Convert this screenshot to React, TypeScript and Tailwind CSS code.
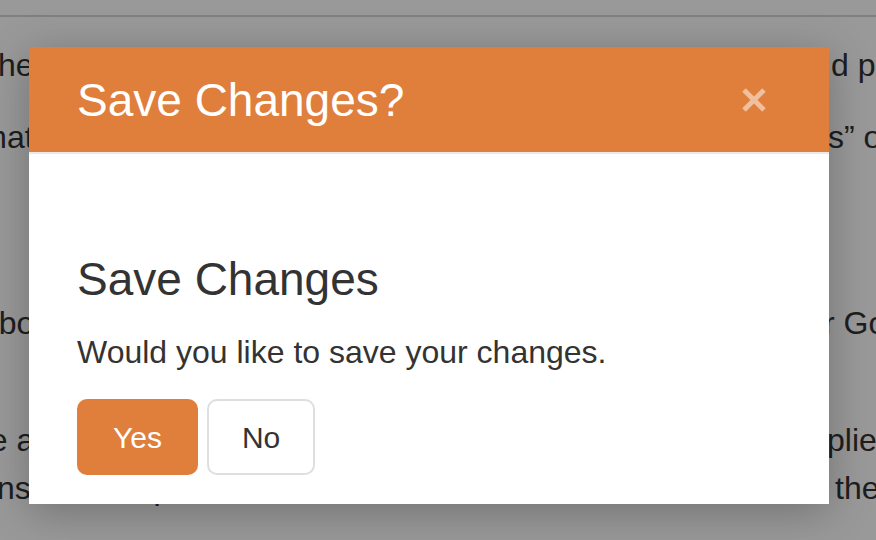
import React from 'react';

const lines = [
  { left: 'the', shift: '-ml-[11px]', right: 'd proposals', rshift: 'ml-[1px]', top: 'mt-[24px]' },
  { left: 'format', shift: '-ml-[57px]', right: 's” or cancel', rshift: '-ml-[2px]', top: 'mt-[24px]' },
  { left: 'above', shift: '-ml-[19px]', right: 'r Google', rshift: '-ml-[6px]', top: 'mt-[138px]' },
  { left: 'the app', shift: '-ml-[37px]', right: 'plies', rshift: '-ml-[3px]', top: 'mt-[69px]' },
  { left: 'license', shift: '-ml-[51px]', right: 'the', rshift: 'ml-[5px]', top: 'mt-0' },
];

const App: React.FC = () => {
  return (
    <div className="relative h-[540px] w-[876px] overflow-hidden bg-white font-['Liberation_Sans',Arial,sans-serif] text-[#333]">
      {/* Page behind the dialog */}
      <div className="h-[17px] border-b-2 border-[#d5d5d5]" />
      {lines.map((line) => (
        <div key={line.left} className={`flex h-[48px] items-center whitespace-nowrap text-[32px] ${line.top}`}>
          <span className="w-[830px] shrink-0 overflow-hidden">
            <span className={`inline-block ${line.shift}`}>{line.left} lorem ipsum dolor sit amet consectetur</span>
          </span>
          <span className={line.rshift}>{line.right}</span>
        </div>
      ))}

      {/* Overlay + modal */}
      <div className="absolute inset-0 bg-black/40">
        <div className="ml-[29px] mt-[47px] w-[800px] bg-white shadow-[0_8px_40px_rgba(0,0,0,0.25)]">
          <div className="flex h-[107px] items-center justify-between border-b-2 border-[#e9e9e9] bg-[#e07e3c] pl-[48px] pr-[62px]">
            <h1 className="text-[46px] leading-none text-white">Save Changes?</h1>
            <button className="text-white opacity-50">
              <svg width="26" height="26" viewBox="0 0 26 26">
                <path d="M3 3 L23 23 M23 3 L3 23" stroke="currentColor" strokeWidth="5" />
              </svg>
            </button>
          </div>
          <div className="px-[48px] pb-[29px] pt-[98px]">
            <h2 className="text-[46px] leading-[55px] text-[#333]">Save Changes</h2>
            <p className="mt-[21px] text-[32px] leading-[48px] text-[#333]">Would you like to save your changes.</p>
            <div className="mt-[23px] flex gap-[9px]">
              <button className="h-[76px] rounded-[10px] border-2 border-[#e07e3c] bg-[#e07e3c] px-[34px] text-[30px] text-white">
                Yes
              </button>
              <button className="h-[76px] rounded-[10px] border-2 border-[#dedede] bg-white px-[33px] text-[30px] text-[#333]">
                No
              </button>
            </div>
          </div>
        </div>
      </div>
    </div>
  );
};

export default App;
